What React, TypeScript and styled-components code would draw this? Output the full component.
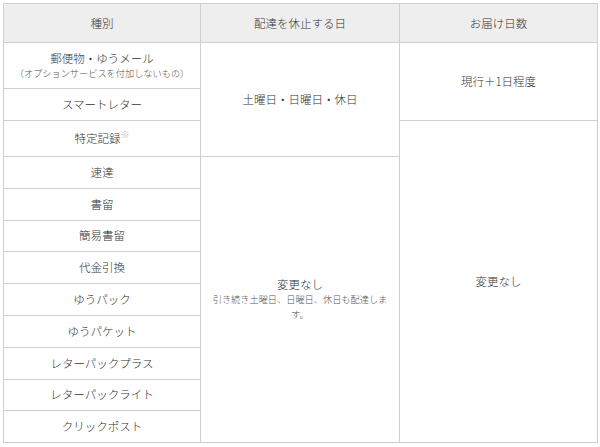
import { createGlobalStyle } from "styled-components";
import styled from "styled-components";

const GlobalStyle = createGlobalStyle`
  html, body {
    margin: 0;
    padding: 0;
    background: #ffffff;
  }
  body {
    font-family: "Noto Sans CJK JP", "Noto Sans", sans-serif;
    font-weight: 300;
    color: #333333;
  }
`;

const Page = styled.div`
  padding: 3px 0 0 3px;
`;

const Table = styled.table`
  width: 594px;
  border-collapse: collapse;
  table-layout: fixed;
  border: 1px solid #cfcfcf;
  font-size: 11.5px;
  line-height: 15px;
`;

const HeadCell = styled.th`
  height: 38px;
  padding: 0;
  background: #eeeeee;
  border: 1px solid #cfcfcf;
  font-weight: 300;
  color: #333333;
  text-align: center;
  vertical-align: middle;
`;

const Cell = styled.td<{ $h?: number }>`
  height: ${({ $h }) => ($h ? `${$h}px` : "auto")};
  padding: 0 10px;
  border: 1px solid #cfcfcf;
  text-align: center;
  vertical-align: middle;
  color: #333333;
`;

const Note = styled.span`
  display: block;
  font-size: 9.2px;
  line-height: 15px;
  color: #555555;
`;

const Mark = styled.sup`
  font-size: 9px;
  line-height: 0;
  color: #b5b5b5;
  vertical-align: 5px;
`;

const kinds = [
  "速達",
  "書留",
  "簡易書留",
  "代金引換",
  "ゆうパック",
  "ゆうパケット",
  "レターパックプラス",
  "レターパックライト",
  "クリックポスト",
];

export default function App() {
  return (
    <>
      <GlobalStyle />
      <Page>
        <Table>
          <colgroup>
            <col style={{ width: 197 }} />
            <col style={{ width: 199 }} />
            <col style={{ width: 198 }} />
          </colgroup>
          <thead>
            <tr>
              <HeadCell>種別</HeadCell>
              <HeadCell>配達を休止する日</HeadCell>
              <HeadCell>お届け日数</HeadCell>
            </tr>
          </thead>
          <tbody>
            <tr>
              <Cell $h={45}>
                郵便物・ゆうメール
                <Note>（オプションサービスを付加しないもの）</Note>
              </Cell>
              <Cell rowSpan={3}>土曜日・日曜日・休日</Cell>
              <Cell rowSpan={2}>現行＋1日程度</Cell>
            </tr>
            <tr>
              <Cell $h={31}>スマートレター</Cell>
            </tr>
            <tr>
              <Cell $h={35}>
                特定記録<Mark>※</Mark>
              </Cell>
              <Cell rowSpan={10}>変更なし</Cell>
            </tr>
            {kinds.map((k, i) => (
              <tr key={k}>
                <Cell $h={30.8}>{k}</Cell>
                {i === 0 && (
                  <Cell rowSpan={9}>
                    変更なし
                    <Note>引き続き土曜日、日曜日、休日も配達します。</Note>
                  </Cell>
                )}
              </tr>
            ))}
          </tbody>
        </Table>
      </Page>
    </>
  );
}
